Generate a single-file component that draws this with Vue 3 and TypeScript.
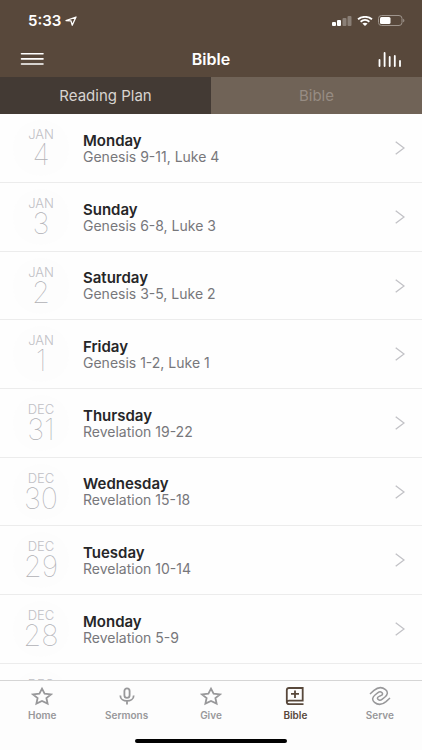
<script setup lang="ts">
import { ref } from 'vue'

interface Reading {
  month: string
  date: number
  day: string
  passage: string
}

type IconName = 'star' | 'mic' | 'book' | 'swirl'

interface Tab {
  label: string
  icon: IconName
}

const readings: Reading[] = [
  { month: 'JAN', date: 4, day: 'Monday', passage: 'Genesis 9-11, Luke 4' },
  { month: 'JAN', date: 3, day: 'Sunday', passage: 'Genesis 6-8, Luke 3' },
  { month: 'JAN', date: 2, day: 'Saturday', passage: 'Genesis 3-5, Luke 2' },
  { month: 'JAN', date: 1, day: 'Friday', passage: 'Genesis 1-2, Luke 1' },
  { month: 'DEC', date: 31, day: 'Thursday', passage: 'Revelation 19-22' },
  { month: 'DEC', date: 30, day: 'Wednesday', passage: 'Revelation 15-18' },
  { month: 'DEC', date: 29, day: 'Tuesday', passage: 'Revelation 10-14' },
  { month: 'DEC', date: 28, day: 'Monday', passage: 'Revelation 5-9' },
  { month: 'DEC', date: 27, day: 'Sunday', passage: 'Revelation 1-4' },
]

const tabs: Tab[] = [
  { label: 'Home', icon: 'star' },
  { label: 'Sermons', icon: 'mic' },
  { label: 'Give', icon: 'star' },
  { label: 'Bible', icon: 'book' },
  { label: 'Serve', icon: 'swirl' },
]

const segments = ['Reading Plan', 'Bible']
const activeSegment = ref('Reading Plan')
const activeTab = ref('Bible')
</script>

<template>
  <div class="screen">
    <header class="header">
      <div class="status">
        <div class="clock">
          <span>5:33</span>
          <svg class="location" viewBox="0 0 12 10" aria-hidden="true">
            <path d="M1 4.6 11 1 7.2 9.2 6 4.8Z" />
          </svg>
        </div>
        <div class="indicators">
          <svg class="signal" viewBox="0 0 20 10" aria-hidden="true">
            <rect x="0" y="6" width="4" height="4" rx="1" />
            <rect x="5" y="4" width="4" height="6" rx="1" />
            <rect class="dim" x="10.5" y="2" width="4" height="8" rx="1" />
            <rect class="dim" x="15.5" y="0" width="4" height="10" rx="1" />
          </svg>
          <svg class="wifi" viewBox="0 0 16 10" aria-hidden="true">
            <path d="M1 3.3C5 0 11 0 15 3.3M3.6 5.7C6.2 3.6 9.8 3.6 12.4 5.7" />
            <path class="dot" d="M5.4 7.6C7 6.4 9 6.4 10.6 7.6L8 10Z" />
          </svg>
          <svg class="battery" viewBox="0 0 27 11" aria-hidden="true">
            <rect class="shell" x=".5" y=".5" width="23.5" height="10" rx="3" />
            <rect class="charge" x="2" y="2" width="10.5" height="7" rx="1.5" />
            <path class="tip" d="M25.2 3.7C26.8 4.2 26.8 6.8 25.2 7.3Z" />
          </svg>
        </div>
      </div>
      <div class="titlebar">
        <button class="tool" type="button" aria-label="Menu">
          <svg class="menu" viewBox="0 0 24 14" aria-hidden="true">
            <path d="M1.5 1.7H23M1.5 6.9H23M1.5 12H23" />
          </svg>
        </button>
        <h1>Bible</h1>
        <button class="tool end" type="button" aria-label="Now playing">
          <svg class="levels" viewBox="0 0 24 15" aria-hidden="true">
            <path d="M1.5 8V14M6.6 1V14M11.7 5V14M16.8 4V14M22 9V14" />
          </svg>
        </button>
      </div>
    </header>

    <nav class="segments" aria-label="Sections">
      <button
        v-for="segment in segments"
        :key="segment"
        type="button"
        :class="{ active: segment === activeSegment }"
        @click="activeSegment = segment"
      >
        {{ segment }}
      </button>
    </nav>

    <main class="list">
      <a v-for="item in readings" :key="item.month + item.date" class="row" href="#">
        <span class="badge">
          <span class="month">{{ item.month }}</span>
          <span class="date">{{ item.date }}</span>
        </span>
        <span class="text">
          <span class="day">{{ item.day }}</span>
          <span class="passage">{{ item.passage }}</span>
        </span>
        <svg class="chevron" viewBox="0 0 10 14" aria-hidden="true">
          <path d="M.7.7 9 7 .7 13.3" />
        </svg>
      </a>
    </main>

    <footer class="footer">
      <nav class="tabs" aria-label="Main">
        <button
          v-for="tab in tabs"
          :key="tab.label"
          type="button"
          :class="{ active: tab.label === activeTab }"
          @click="activeTab = tab.label"
        >
          <svg viewBox="0 0 22 20" aria-hidden="true">
            <path
              v-if="tab.icon === 'star'"
              d="M11 2.6 13.6 7.6 20 8.4 15.4 12 16.6 17.6 11 15 5.4 17.6 6.6 12 2 8.4 8.4 7.6Z"
            />
            <template v-else-if="tab.icon === 'mic'">
              <rect x="8.4" y="2.4" width="5.2" height="9.4" rx="2.6" />
              <path d="M4.3 9.4C4.3 16.8 17.7 16.8 17.7 9.4M11 15V18.6" />
            </template>
            <template v-else-if="tab.icon === 'book'">
              <path d="M19.5 18.2H5.2Q2.8 18.2 2.8 16V4Q2.8 2 5 2H18.7V14.6H5.2Q2.8 14.6 2.8 16.4" />
              <path d="M11 4.6V12M7 7.8H15" />
            </template>
            <path
              v-else
              class="swirl"
              d="M1 8 5 4.4C9 1 13 .8 16.5 3.6C19.5 6 18.5 9 16 11L13 13.4C11 15 8.6 14 8.4 12.2C8.3 11 9 10.8 11 10C13 9.2 13.7 9 13.6 7.8C13.4 6 11 5 9 6.6L6 9C3.5 11 2.5 14 5.5 16.4C9 19.2 13 19 17 15.6L21 12"
            />
          </svg>
          <span>{{ tab.label }}</span>
        </button>
      </nav>
      <div class="home-bar"></div>
    </footer>
  </div>
</template>

<style>
body {
  margin: 0;
  background: #fefefe;
}
</style>

<style scoped>
.screen {
  display: flex;
  flex-direction: column;
  height: 100vh;
  overflow: hidden;
  background: #fefefe;
  color: #262628;
  font-family: Inter, "Liberation Sans", sans-serif;
}

button {
  margin: 0;
  padding: 0;
  border: 0;
  background: none;
  color: inherit;
  font: inherit;
  cursor: pointer;
}

svg {
  display: block;
  flex: none;
  fill: none;
  stroke: currentColor;
}

.header {
  flex: none;
  background: #58483b;
  color: #fff;
}

.status {
  display: flex;
  align-items: center;
  justify-content: space-between;
  height: 41px;
  padding: 0 17px 0 28px;
}

.clock {
  display: flex;
  align-items: center;
  gap: 4px;
  font-size: 15px;
  font-weight: 600;
}

.location {
  width: 12px;
  height: 10px;
  stroke-width: 1.3;
  stroke-linejoin: round;
}

.indicators {
  display: flex;
  align-items: center;
  gap: 5px;
}

.signal {
  width: 20px;
  height: 10px;
  fill: #fff;
  stroke: none;
}

.dim {
  opacity: 0.3;
}

.wifi {
  width: 16px;
  height: 10px;
  stroke-width: 1.8;
}

.wifi .dot {
  fill: #fff;
  stroke: none;
}

.battery {
  width: 27px;
  height: 11px;
}

.shell {
  stroke: #9f958d;
}

.charge {
  fill: #fff;
  stroke: none;
}

.tip {
  fill: #9f958d;
  stroke: none;
}

.titlebar {
  display: grid;
  grid-template-columns: 1fr auto 1fr;
  align-items: center;
  height: 36px;
  padding: 0 20px;
}

.titlebar h1 {
  margin: 0;
  font-size: 16px;
  font-weight: 600;
}

.tool {
  justify-self: start;
}

.end {
  justify-self: end;
}

.menu {
  width: 24px;
  height: 14px;
  stroke-width: 1.6;
  stroke-linecap: round;
}

.levels {
  width: 24px;
  height: 15px;
  stroke-width: 1.8;
  stroke-linecap: round;
}

.segments {
  display: grid;
  flex: none;
  grid-template-columns: 1fr 1fr;
  height: 37px;
}

.segments button {
  background: #706357;
  color: #978c83;
  font-size: 15px;
}

.segments .active {
  background: #433a34;
  color: #d8d4d1;
}

.list {
  flex: 1;
  min-height: 0;
  overflow: hidden;
}

.row {
  display: flex;
  align-items: center;
  box-sizing: border-box;
  height: 69px;
  padding: 0 17px 0 13px;
  border-bottom: 1px solid #ececec;
  color: inherit;
  text-decoration: none;
}

.row:nth-child(3n) {
  height: 68px;
}

.badge {
  display: flex;
  flex-direction: column;
  align-items: center;
  justify-content: center;
  width: 56px;
  height: 56px;
  margin-right: 14px;
  border-radius: 50%;
  background: #fdfdfd;
  color: #b0b0b5;
}

.month {
  font-size: 13px;
  font-weight: 300;
  line-height: 14px;
  color: #c0c0c5;
}

.date {
  font-size: 29px;
  font-weight: 100;
  line-height: 28px;
}

.text {
  display: flex;
  flex: 1;
  flex-direction: column;
}

.day {
  font-size: 15px;
  font-weight: 600;
  line-height: 17px;
}

.passage {
  color: #77777b;
  font-size: 14px;
  line-height: 16px;
}

.chevron {
  width: 10px;
  height: 14px;
  color: #c2c2c6;
  stroke-width: 1.3;
}

.footer {
  display: flex;
  flex: none;
  flex-direction: column;
  align-items: center;
  justify-content: space-between;
  box-sizing: border-box;
  height: 70px;
  padding-bottom: 7px;
  border-top: 1px solid #d5d5d5;
  background: #fdfdfd;
}

.tabs {
  display: grid;
  grid-template-columns: repeat(5, 1fr);
  width: 100%;
  padding-top: 5px;
}

.tabs button {
  display: flex;
  flex-direction: column;
  align-items: center;
  gap: 2px;
  color: #98989a;
  font-size: 10px;
  font-weight: 600;
  line-height: 14px;
}

.tabs .active {
  color: #58483b;
}

.tabs svg {
  width: 22px;
  height: 20px;
  stroke-width: 1.8;
}

.tabs .swirl {
  stroke-width: 1.5;
}

.home-bar {
  width: 36%;
  height: 4px;
  border-radius: 2px;
  background: #000;
}
</style>
